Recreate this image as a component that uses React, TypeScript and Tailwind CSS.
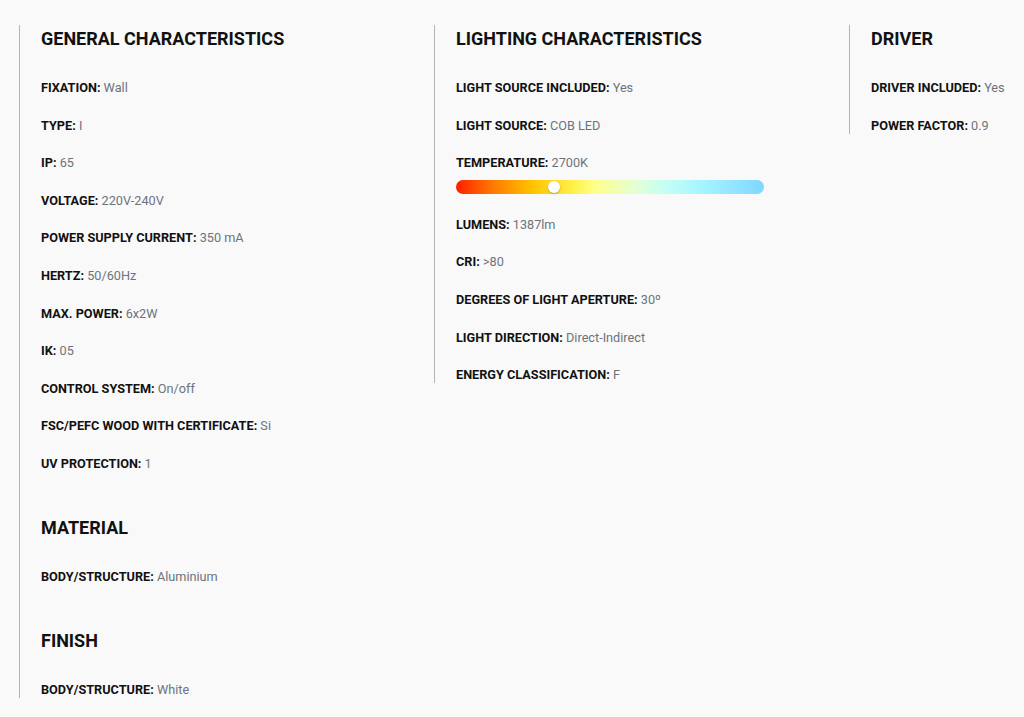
import React from "react";

type Item = { label: string; value: string; bar?: boolean };

function Row({ item }: { item: Item }) {
  return (
    <div className="flex flex-col">
      <div className="text-[12.7px] leading-[16px] whitespace-nowrap">
        <span className="font-bold text-[#111111]">{item.label}:</span>{" "}
        <span className="text-[#6c737c]">{item.value}</span>
      </div>
      {item.bar && (
        <div className="relative mt-[9px] mb-[1px] h-[14px] w-[308px] rounded-full bg-[linear-gradient(90deg,#ff1e00_0%,#ff7a00_12%,#ffc400_25%,#fff04a_38%,#ffff8a_45%,#e4ffd2_58%,#c4fff4_68%,#a6f4ff_80%,#80d6ff_100%)]">
          <div className="absolute left-[92px] top-[1px] h-[12px] w-[12px] rounded-full bg-white shadow-[0_1px_2px_rgba(0,0,0,0.25)]" />
        </div>
      )}
    </div>
  );
}

function Section({ title, items, first }: { title: string; items: Item[]; first?: boolean }) {
  return (
    <div className={first ? "" : "mt-[42px]"}>
      <h2 className="text-[18px] leading-[28px] font-bold text-[#111111] whitespace-nowrap">{title}</h2>
      <div className="mt-[27px] flex flex-col gap-[21.6px]">
        {items.map((it) => (
          <Row key={it.label} item={it} />
        ))}
      </div>
    </div>
  );
}

export default function App() {
  const general: Item[] = [
    { label: "FIXATION", value: "Wall" },
    { label: "TYPE", value: "I" },
    { label: "IP", value: "65" },
    { label: "VOLTAGE", value: "220V-240V" },
    { label: "POWER SUPPLY CURRENT", value: "350 mA" },
    { label: "HERTZ", value: "50/60Hz" },
    { label: "MAX. POWER", value: "6x2W" },
    { label: "IK", value: "05" },
    { label: "CONTROL SYSTEM", value: "On/off" },
    { label: "FSC/PEFC WOOD WITH CERTIFICATE", value: "Si" },
    { label: "UV PROTECTION", value: "1" },
  ];
  const lighting: Item[] = [
    { label: "LIGHT SOURCE INCLUDED", value: "Yes" },
    { label: "LIGHT SOURCE", value: "COB LED" },
    { label: "TEMPERATURE", value: "2700K", bar: true },
    { label: "LUMENS", value: "1387lm" },
    { label: "CRI", value: ">80" },
    { label: "DEGREES OF LIGHT APERTURE", value: "30º" },
    { label: "LIGHT DIRECTION", value: "Direct-Indirect" },
    { label: "ENERGY CLASSIFICATION", value: "F" },
  ];
  const driver: Item[] = [
    { label: "DRIVER INCLUDED", value: "Yes" },
    { label: "POWER FACTOR", value: "0.9" },
  ];
  return (
    <div
      className="w-[1024px] h-[717px] overflow-hidden bg-[#f9f9f9]"
      style={{ fontFamily: "Roboto, 'Liberation Sans', sans-serif" }}
    >
      <div className="flex items-start pl-[19px] pt-[25px]">
        <div className="w-[415px] shrink-0 border-l border-[#b3b3b3] pl-[21px]">
          <Section title="GENERAL CHARACTERISTICS" items={general} first />
          <Section title="MATERIAL" items={[{ label: "BODY/STRUCTURE", value: "Aluminium" }]} />
          <Section title="FINISH" items={[{ label: "BODY/STRUCTURE", value: "White" }]} />
        </div>
        <div className="w-[415px] shrink-0 border-l border-[#b3b3b3] pl-[21px]">
          <Section title="LIGHTING CHARACTERISTICS" items={lighting} first />
        </div>
        <div className="w-[415px] shrink-0 border-l border-[#b3b3b3] pl-[21px]">
          <Section title="DRIVER" items={driver} first />
        </div>
      </div>
    </div>
  );
}
